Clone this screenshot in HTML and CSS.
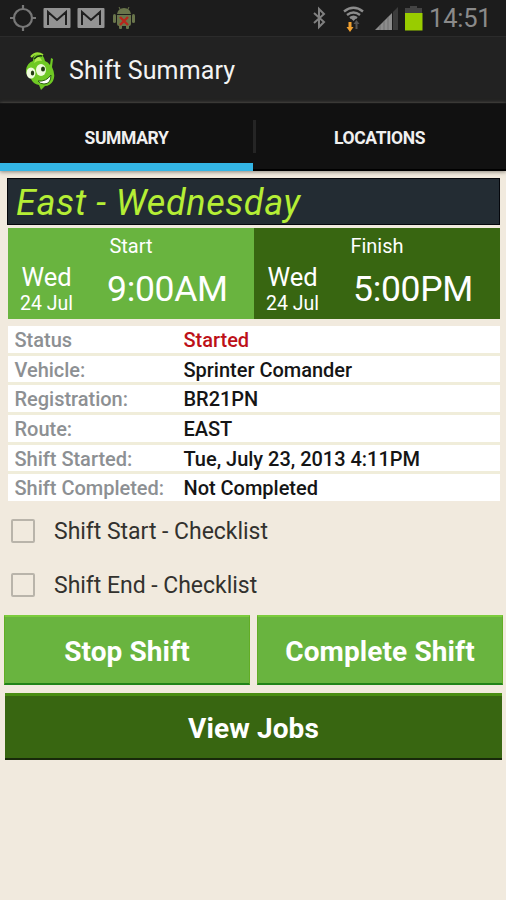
FILE: index.html
```html
<!DOCTYPE html>
<html lang="en">
<head>
<meta charset="utf-8">
<title>Shift Summary</title>
<link rel="stylesheet" href="styles.css">
</head>
<body>
<div class="status">
  <svg class="status-icons" width="140" height="36" viewBox="0 0 140 36">
    <g fill="none" stroke="#777" stroke-width="2.200"><circle cx="23" cy="18" r="9"/><path d="M23 5v4M23 27v4M10 18h4M32 18h4"/></g>
    <g fill="#939393"><rect x="43.500" y="8" width="27" height="20" rx="1"/><rect x="77.500" y="8" width="27" height="20" rx="1"/></g>
    <g fill="none" stroke="#202020" stroke-width="2"><path d="M48 25V12l9 8 9-8v13M82 25V12l9 8 9-8v13"/></g>
    <g fill="#69754b"><path d="M117 14q1-6 7-6t7 6zM117 15h14v9q0 2-2 2h-10q-2 0-2-2z"/><rect x="113" y="14" width="3" height="9" rx="1.500"/><rect x="132" y="14" width="3" height="9" rx="1.500"/><rect x="119" y="24" width="3" height="5" rx="1"/><rect x="126" y="24" width="3" height="5" rx="1"/></g>
    <path d="M120 9l-1-2M128 9l1-2" stroke="#69754b"/>
    <path d="M120 17l8 8M128 17l-8 8" stroke="#b8261c" stroke-width="2.400"/>
  </svg>
  <div class="status-right">
    <svg width="116" height="36" viewBox="310 0 116 36">
      <path d="M314 13l10 9-5 5V9l5 5-10 9" fill="none" stroke="#808080" stroke-width="2"/>
      <g fill="none" stroke="#8c8c8c" stroke-width="2.400"><path d="M344 11.500q9.500-7.500 19 0M347 15q6.500-5 13 0M350 18q3.500-2.500 7 0"/></g>
      <path d="M350 17.500l3.500 3.500 3.500-3.500z" fill="#8c8c8c"/>
      <path d="M348.500 22h3v5h2l-3.500 5-3.500-5h2z" fill="#f0a030"/>
      <path d="M355.500 29v-5h-2l3-4 3 4h-2v5z" fill="#555"/>
      <path d="M375 30l17-17v17z" fill="#8c8c8c"/><path d="M393 12l5-5v23h-5z" fill="#3c3c3c"/>
      <path d="M380 25v5M384 21v9M388 17v13" stroke="#666" stroke-width=".7"/>
      <path d="M405 8h5V6h7v2h5v5h-17z" fill="#444"/><rect x="405" y="13" width="17.500" height="17.500" fill="#99cc00"/>
    </svg>
    <span class="clock">14:51</span>
  </div>
</div>
<header class="appbar">
  <svg class="logo" width="30" height="40" viewBox="25 47 30 40">
    <path d="M33 58q0-8 6-7 5 1 6 7 3 1 5 4l1-7 2 1-1 8q4 8 1 14-3 5-8 5l-4 4-2-5q-6-1-8-6-5-3-5-9 1-7 7-9z" fill="#6fc924"/>
    <path d="M36 54q4-1 6 4-4-1-8 2z" fill="#b2ec55"/>
    <path d="M31 54q5-6 12-2" fill="none" stroke="#99df35" stroke-width="2"/>
    <path d="M34 56q4-4 8-3" fill="none" stroke="#18350b" stroke-width="1.500"/>
    <ellipse cx="31" cy="70" rx="4.500" ry="5.500" fill="#effbdc"/><ellipse cx="41" cy="67" rx="5" ry="6" fill="#effbdc"/>
    <ellipse cx="32.500" cy="70" rx="1.700" ry="2.500" fill="#223b12"/><ellipse cx="43" cy="66" rx="2" ry="2.500" fill="#223b12"/>
    <path d="M38 78q8 1 13-6 0 9-7 9-4 0-6-3z" fill="#fff" stroke="#2c6110"/>
  </svg>
  <h1 class="title">Shift Summary</h1>
</header>
<nav class="tabs">
  <div class="tab active">SUMMARY</div>
  <div class="tab">LOCATIONS</div>
</nav>
<main>
  <h2 class="route">East - Wednesday</h2>
  <section class="times">
    <div class="time start">
      <div class="label">Start</div>
      <div class="moment"><div class="date"><span class="day">Wed</span><span class="dm">24 Jul</span></div><div class="hour">9:00AM</div></div>
    </div>
    <div class="time finish">
      <div class="label">Finish</div>
      <div class="moment"><div class="date"><span class="day">Wed</span><span class="dm">24 Jul</span></div><div class="hour">5:00PM</div></div>
    </div>
  </section>
  <dl class="details">
    <div class="row"><dt>Status</dt><dd class="red">Started</dd></div>
    <div class="row"><dt>Vehicle:</dt><dd>Sprinter Comander</dd></div>
    <div class="row"><dt>Registration:</dt><dd>BR21PN</dd></div>
    <div class="row"><dt>Route:</dt><dd>EAST</dd></div>
    <div class="row"><dt>Shift Started:</dt><dd>Tue, July 23, 2013 4:11PM</dd></div>
    <div class="row"><dt>Shift Completed:</dt><dd>Not Completed</dd></div>
  </dl>
  <div class="checks">
    <div class="check"><i class="box"></i><span>Shift Start - Checklist</span></div>
    <div class="check"><i class="box"></i><span>Shift End - Checklist</span></div>
  </div>
  <div class="buttons">
    <button class="btn light">Stop Shift</button>
    <button class="btn light">Complete Shift</button>
    <button class="btn dark">View Jobs</button>
  </div>
</main>
</body>
</html>
```
FILE: styles.css
```css
* { box-sizing: border-box; }
body { margin: 0; width: 506px; height: 900px; overflow: hidden; background: #f1eade; font-family: Roboto, sans-serif; }
h1, h2, dl, dt, dd { margin: 0; font-weight: 400; }
svg { display: block; }
.status { height: 36px; background: #1c1c1c; display: flex; justify-content: space-between; }
.status-right { display: flex; width: 196px; }
.clock { font-size: 25.500px; letter-spacing: -.2px; line-height: 36px; color: #8a8a8a; margin-left: 3px; }
.appbar { height: 67px; background: #222; border-top: 1px solid #2b2b2b; display: flex; align-items: center; padding-left: 25px; }
.title { color: #f3f3f3; font-size: 25px; margin-left: 14px; letter-spacing: .15px; line-height: 30px; padding-top: 2px; }
.tabs { height: 68px; background: #111; display: grid; grid-template-columns: 253px 1fr; box-shadow: 0 1px 4px #8a857b; position: relative; border-top: 1px solid #181818; }
.tab { color: #f0f0f0; font-size: 17.500px; letter-spacing: -.35px; font-weight: 700; display: flex; align-items: center; justify-content: center; border-bottom: 2px solid #000; padding-top: 2px; }
.tab.active { border-bottom: 8px solid #33b5e5; padding-top: 8px; }
.tab + .tab { background: linear-gradient(#252525, #252525) 0 16px / 3px 33px no-repeat; }
.route { margin: 7px 6px 0 7px; height: 47px; background: #232c33; border: 1px solid #05070c; color: #b5ee35; font-size: 36px; letter-spacing: .6px; font-style: italic; line-height: 49px; padding-left: 8px; }
.times { margin: 3px 6px 0 8px; display: grid; grid-template-columns: 246px 246px; height: 91px; color: #fff; }
.start { background: #69b43f; }
.finish { background: #386611; }
.label { font-size: 20px; line-height: 24px; text-align: center; padding-top: 6px; height: 31px; }
.moment { display: flex; }
.date { width: 77px; display: flex; flex-direction: column; align-items: center; padding-top: 3px; }
.day { font-size: 25.500px; line-height: 31px; }
.dm { font-size: 19.500px; line-height: 19px; padding-top: 1px; }
.hour { font-size: 35.500px; letter-spacing: -.3px; line-height: 41px; padding-top: 10px; margin-left: 22px; }
.details { margin: 7px 6px 0 8px; display: grid; gap: 3px; background: #f0edda; }
.row { background: #fff; height: 26.700px; display: grid; grid-template-columns: 169px 1fr; padding-left: 6.500px; font-size: 20px; line-height: 28px; font-weight: 500; letter-spacing: -.02px; }
.row dt { color: #8d9093; font-weight: 500; }
.row dd { color: #151515; font-weight: 500; }
.row .red { color: #bd1118; }
.checks { padding: 3px 0 0 11px; height: 114px; }
.check { height: 54px; display: flex; align-items: center; font-size: 23px; letter-spacing: -.03px; color: #33322e; }
.box { width: 24px; height: 24px; border: 2px solid #b9b4aa; border-radius: 2px; margin: -1px 19px 0 0; }
.buttons { display: grid; grid-template-columns: 246px 246px; column-gap: 7px; row-gap: 8px; padding-left: 4px; }
.btn { border: 0; font: 700 28px/69px Roboto, sans-serif; height: 70px; color: #fff; padding: 0; letter-spacing: .1px; }
.light { background: #69b43f; border-top: 2px solid #7ccc3c; border-bottom: 2px solid #218419; border-left: 1px solid #62ad25; border-right: 1px solid #62ad25; }
.dark { grid-column: 1 / 3; margin: 0 1px; height: 67px; line-height: 58px; padding-top: 4px; background: #386611; border-top: 3px solid #4a8d12; border-bottom: 2px solid #18290a; }
```
